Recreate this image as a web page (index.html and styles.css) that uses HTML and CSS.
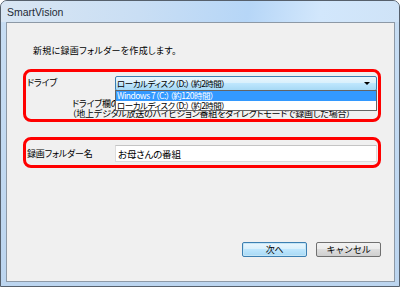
FILE: index.html
```html
<!DOCTYPE html>
<html lang="ja">
<head>
    <meta charset="UTF-8">
    <title>SmartVision</title>
    <link rel="stylesheet" href="styles.css">
</head>
<body>
    <div class="window">
        <div class="titlebar">SmartVision</div>
        <div class="frame">
            <div class="client">
                <p class="intro">新規に録画フォルダーを作成します。</p>

                <div class="mark drive-box">
                    <div class="row">
                        <span class="label">ドライブ</span>
                        <div class="combo">
                            <div class="select">
                                <span>ローカルディスク（D:）（約2時間）</span>
                                <span class="arrow"></span>
                            </div>
                            <ul class="list">
                                <li class="selected">Windows 7（C:）（約120時間）</li>
                                <li>ローカルディスク（D:）（約2時間）</li>
                            </ul>
                        </div>
                    </div>
                    <p class="desc">
                        ドライブ欄の時間は録画できる目安です。<br>
                        （地上デジタル放送のハイビジョン番組をダイレクトモードで録画した場合）
                    </p>
                </div>

                <div class="mark name-box">
                    <div class="row">
                        <span class="label">録画フォルダー名</span>
                        <input type="text" class="name-input" value="お母さんの番組">
                    </div>
                </div>

                <div class="buttons">
                    <button class="btn default">次へ</button>
                    <button class="btn">キャンセル</button>
                </div>
            </div>
        </div>
    </div>
</body>
</html>
```

FILE: styles.css
```css
body {
    margin: 0;
    background: #ffffff;
    font-family: "Noto Sans CJK JP", "Liberation Sans", sans-serif;
    font-size: 9px;
    letter-spacing: -0.2px;
    font-feature-settings: "palt";
    color: #000;
}
.window {
    width: 400px;
    height: 287px;
    box-sizing: border-box;
    border: 1px solid #56606c;
    border-radius: 7px 7px 0 0;
    background: #c3daf2;
    display: flex;
    flex-direction: column;
    overflow: hidden;
}
.titlebar {
    height: 21px;
    padding-left: 6px;
    line-height: 23px;
    font-family: "Liberation Sans", sans-serif;
    font-size: 10.5px;
    letter-spacing: 0;
    color: #1e2a36;
    background: linear-gradient(100deg, #d9e6f3 0%, #c9def4 35%, #b6d6f7 62%, #d2e7fc 80%, #cfe3f7 100%);
}
.frame {
    flex: 1;
    display: flex;
    padding: 0 4px 4px 5px;
    background: linear-gradient(180deg, #c7ddf3, #bcd5ef);
}
.client {
    flex: 1;
    display: flex;
    flex-direction: column;
    background: #f0f0f0;
    border: 1px solid #8d99a6;
    padding: 0 13px 24px 16px;
}
.intro {
    margin: 22px 0 12px 10px;
    line-height: 12px;
    letter-spacing: 0.3px;
}
.mark {
    border: 3px solid #ff0000;
    border-radius: 8px;
    box-sizing: border-box;
    width: 358px;
}
.drive-box {
    position: relative;
    padding: 4px 1px 0 1px;
}
.name-box {
    margin-top: 15px;
    padding: 5px 1px 3px 1px;
}
.row {
    display: flex;
    align-items: center;
}
.label {
    width: 88px;
    flex: none;
}
.drive-box .row {
    align-items: flex-start;
}
.drive-box .label {
    padding-top: 1px;
    line-height: 11px;
}
.combo {
    position: relative;
    flex: 1;
    font-size: 8.5px;
    letter-spacing: -0.5px;
}
.select {
    height: 15px;
    box-sizing: border-box;
    border: 1px solid #3c7fb1;
    border-radius: 2px;
    background: linear-gradient(180deg, #eaf6fd 0%, #d9f0fc 45%, #bee6fd 50%, #a7d9f5 100%);
    display: flex;
    align-items: center;
    justify-content: space-between;
    padding: 0 6px 0 1px;
    line-height: 13px;
}
.arrow {
    width: 0;
    height: 0;
    border-left: 3px solid transparent;
    border-right: 3px solid transparent;
    border-top: 3px solid #000;
}
.list {
    position: absolute;
    top: 14px;
    left: 0;
    right: 0;
    margin: 0;
    padding: 0;
    list-style: none;
    background: #fff;
    border: 1px solid #646464;
    line-height: 9.5px;
}
.list li {
    height: 9.5px;
    padding-left: 1px;
}
.list li.selected {
    background: #3399ff;
    color: #fff;
}
.desc {
    margin: 8px 0 0 45px;
    line-height: 10px;
    white-space: nowrap;
}
.name-input {
    flex: 1;
    height: 17px;
    box-sizing: border-box;
    border: 1px solid #dcdcdc;
    border-top-color: #c4c4c4;
    background: #fff;
    font-family: inherit;
    font-size: 9.5px;
    letter-spacing: -0.2px;
    font-feature-settings: "palt";
    padding: 0 2px;
    margin: 0;
    outline: none;
}
.buttons {
    margin-top: auto;
    display: flex;
    justify-content: flex-end;
    gap: 9px;
}
.btn {
    width: 65px;
    height: 15px;
    padding: 0;
    font-family: inherit;
    font-size: 9px;
    letter-spacing: -0.2px;
    line-height: 13px;
    border: 1px solid #707070;
    border-radius: 2px;
    background: linear-gradient(180deg, #f2f2f2 0%, #ebebeb 45%, #dddddd 50%, #cfcfcf 100%);
    color: #000;
}
.btn.default {
    border-color: #3c7fb1;
    background: linear-gradient(180deg, #eaf6fd 0%, #d9f0fc 45%, #bee6fd 50%, #a7d9f5 100%);
    box-shadow: inset 0 0 0 1px #c4e5f6;
}
```
